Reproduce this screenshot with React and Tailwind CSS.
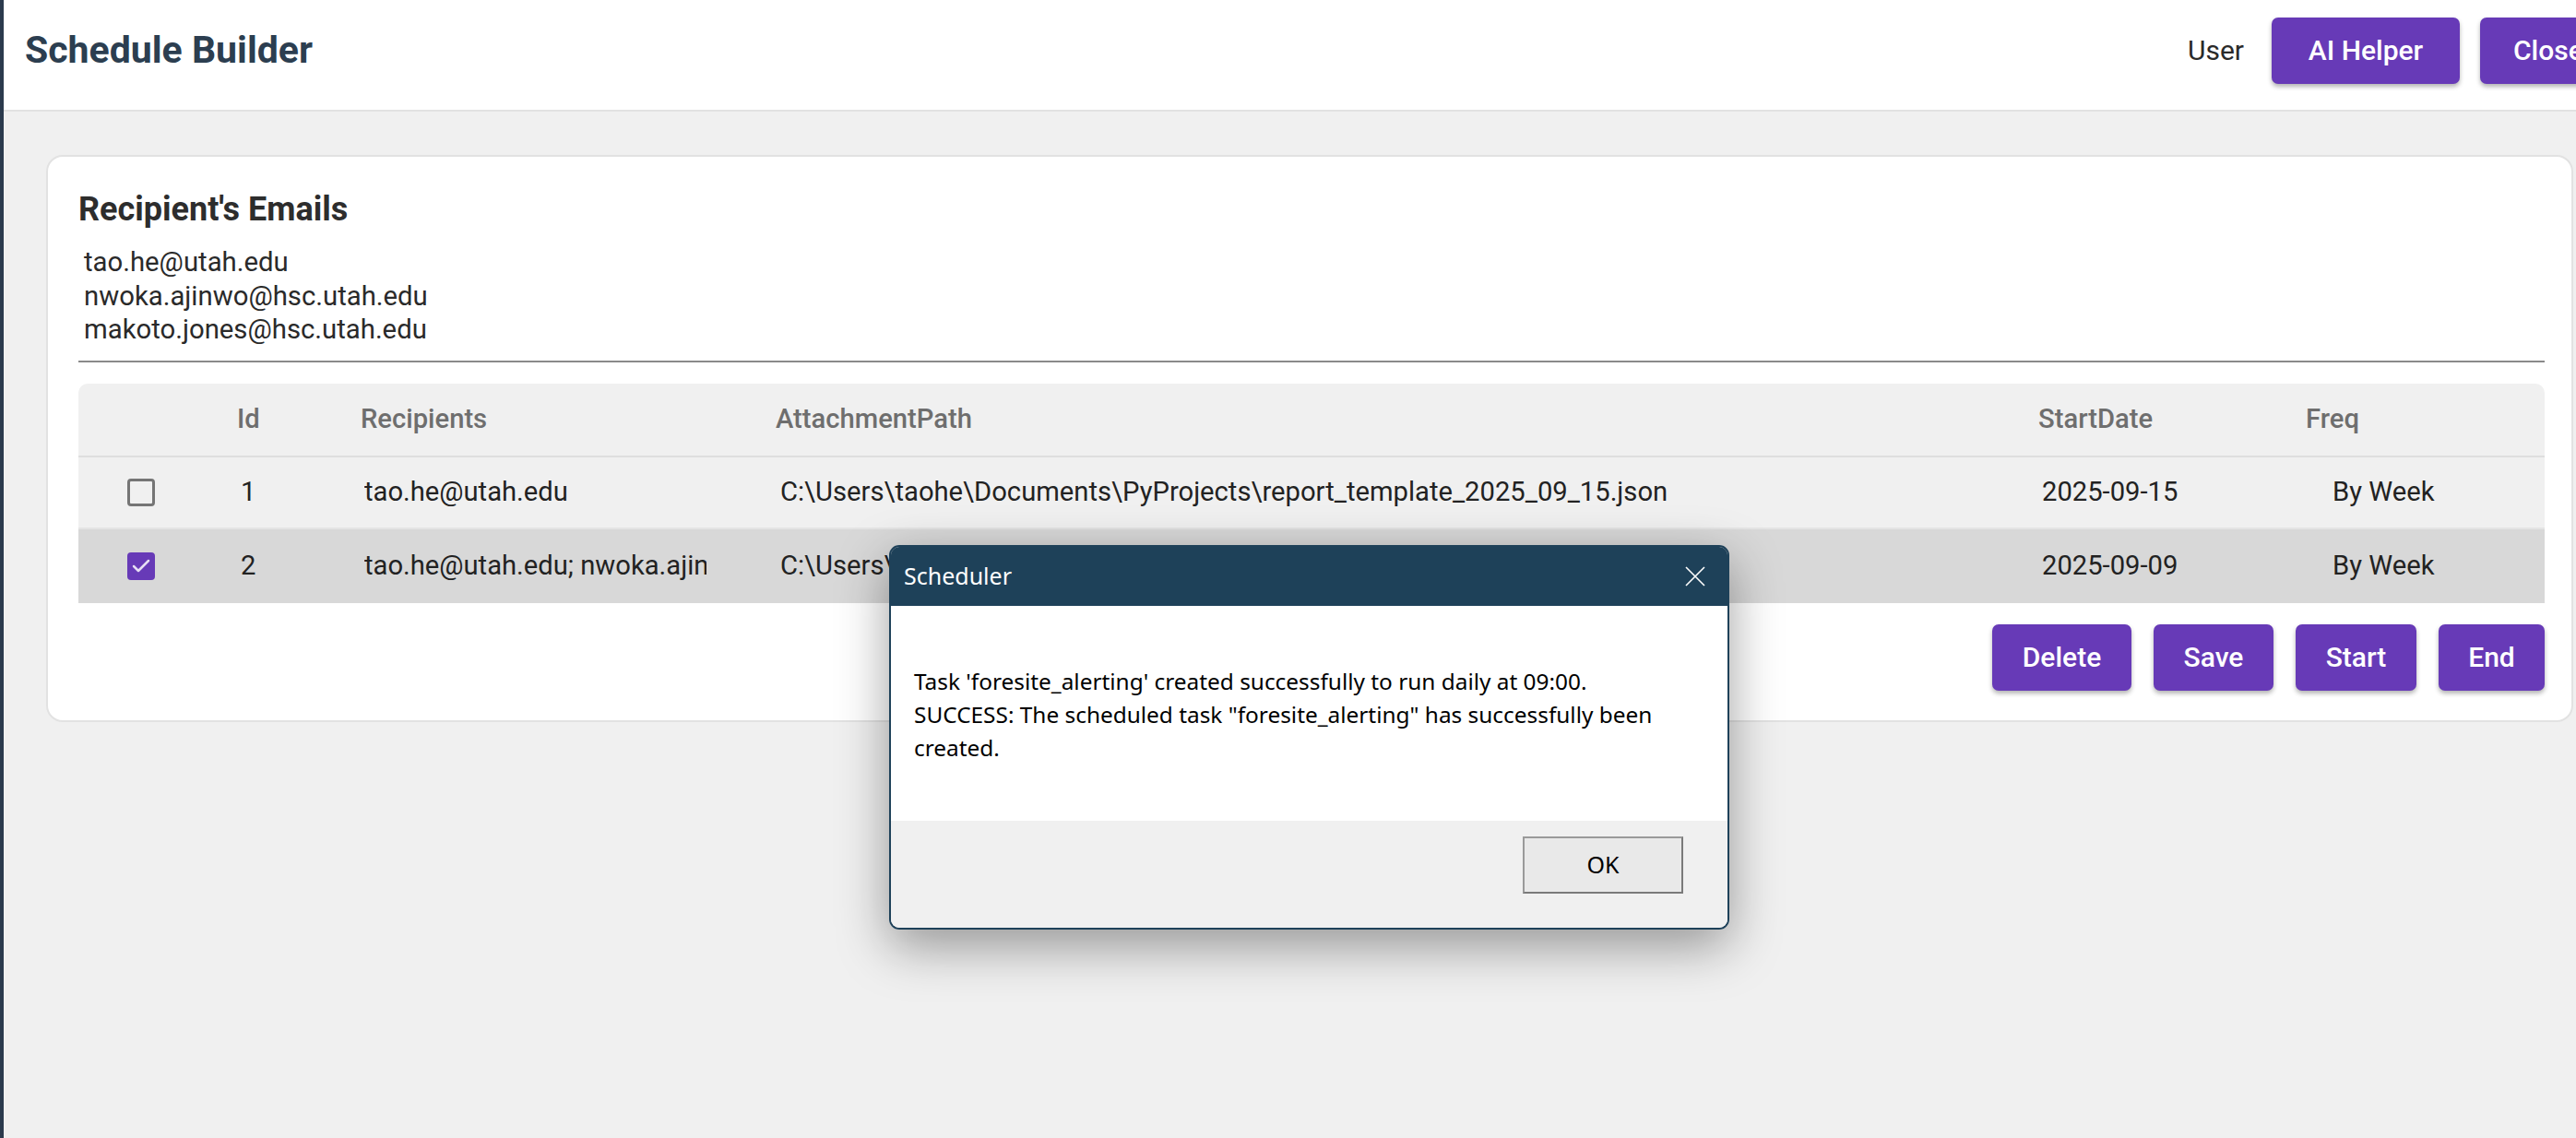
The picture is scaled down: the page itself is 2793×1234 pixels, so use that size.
import { Check } from 'lucide-react'

const rows = [
  {
    id: 1,
    recipients: 'tao.he@utah.edu',
    path: 'C:\\Users\\taohe\\Documents\\PyProjects\\report_template_2025_09_15.json',
    start: '2025-09-15',
    freq: 'By Week',
    checked: false,
  },
  {
    id: 2,
    recipients: 'tao.he@utah.edu; nwoka.ajinwo@hsc.utah.edu; makoto.jones@hsc.utah.edu',
    path: 'C:\\Users\\taohe\\Documents\\PyProjects\\report_template_2025_09_09.json',
    start: '2025-09-09',
    freq: 'By Week',
    checked: true,
  },
]

const emails = ['tao.he@utah.edu', 'nwoka.ajinwo@hsc.utah.edu', 'makoto.jones@hsc.utah.edu']

const cols = 'grid grid-cols-[130px_155px_450px_1370px_290px_1fr]'

function PurpleButton({ children, className = '' }) {
  return (
    <button
      className={`shrink-0 h-[72px] rounded-[7px] bg-[#673ab7] text-white text-[30px] font-medium shadow-[0_3px_5px_rgba(0,0,0,0.3)] ${className}`}
    >
      {children}
    </button>
  )
}

function Checkbox({ checked }) {
  if (checked) {
    return (
      <div className="w-[30px] h-[30px] rounded-[4px] bg-[#673ab7] flex items-center justify-center">
        <Check size={24} strokeWidth={2.5} className="text-[#e6def3]" />
      </div>
    )
  }
  return <div className="w-[30px] h-[30px] rounded-[4px] border-[3px] border-[#757575]" />
}

export default function App() {
  return (
    <div className="relative w-[2793px] h-[1234px] overflow-hidden bg-[#f0f0f0] border-l-4 border-[#2b3a4d] font-['Roboto',sans-serif]">
      {/* Header */}
      <header className="h-[121px] bg-white border-b-2 border-[#e2e2e2] flex items-center pl-[23px] pb-[10px]">
        <h1 className="text-[41px] font-bold text-[#2c3e50]">Schedule Builder</h1>
        <div className="ml-auto mr-[-46px] flex items-center shrink-0">
          <span className="text-[30px] text-[#2a2a2a]">User</span>
          <PurpleButton className="ml-[30px] w-[204px]">AI Helper</PurpleButton>
          <PurpleButton className="ml-[22px] w-[150px] text-left pl-[36px]">Close</PurpleButton>
        </div>
      </header>

      {/* Card */}
      <div className="ml-[46px] mt-[47px] w-[2740px] bg-white border-2 border-[#e2e2e2] rounded-[18px] pl-[33px] pr-[29px] pt-[29px] pb-[32px]">
        <h2 className="text-[36px] leading-[56px] font-bold text-[#2d2d2d]">Recipient&apos;s Emails</h2>
        <div className="mt-[11px] pl-[6px] pb-[15px] border-b-2 border-[#8a8a8a] text-[29.3px] leading-[36.5px] text-[#2a2a2a]">
          {emails.map(e => (
            <div key={e}>{e}</div>
          ))}
        </div>

        {/* Table */}
        <div className="mt-[23px] rounded-t-[10px] overflow-hidden bg-[#f0f0f0]">
          <div className={`${cols} h-[80px] items-center border-b-2 border-[#dedede] text-[29.2px] font-medium text-[#6e6e6e]`}>
            <div />
            <div className="pl-[42px]">Id</div>
            <div className="pl-[21px]">Recipients</div>
            <div className="pl-[21px]">AttachmentPath</div>
            <div className="pl-[20px]">StartDate</div>
            <div className="pl-[20px]">Freq</div>
          </div>
          {rows.map(r => (
            <div
              key={r.id}
              className={`${cols} h-[78px] items-center text-[29.2px] text-[#222] ${r.checked ? 'bg-[#d8d8d8] h-[80px]' : 'border-b-2 border-[#e4e4e4]'}`}
            >
              <div className="pl-[53px]">
                <Checkbox checked={r.checked} />
              </div>
              <div className="pl-[46px]">{r.id}</div>
              <div className="pl-[25px] pr-[54px]">
                <div className="overflow-hidden whitespace-nowrap">{r.recipients}</div>
              </div>
              <div className="pl-[26px] whitespace-nowrap overflow-hidden">{r.path}</div>
              <div className="pl-[24px]">{r.start}</div>
              <div className="pl-[49px]">{r.freq}</div>
            </div>
          ))}
        </div>

        <div className="mt-[23px] flex justify-end gap-[24px]">
          <PurpleButton className="w-[151px]">Delete</PurpleButton>
          <PurpleButton className="w-[130px]">Save</PurpleButton>
          <PurpleButton className="w-[131px]">Start</PurpleButton>
          <PurpleButton className="w-[115px]">End</PurpleButton>
        </div>
      </div>

      {/* Scheduler dialog */}
      <div className="absolute left-[960px] top-[591px] w-[911px] h-[417px] flex flex-col rounded-[11px] border-2 border-[#1e4159] overflow-hidden shadow-[0_18px_55px_rgba(0,0,0,0.38)] font-['Noto_Sans',sans-serif]">
        <div className="h-[64px] shrink-0 bg-[#1e4159] flex items-center pl-[14px] pr-[24px] text-white">
          <span className="text-[25px]">Scheduler</span>
          <svg className="ml-auto" width="22" height="22" viewBox="0 0 22 22">
            <path d="M1 1 L21 21 M21 1 L1 21" stroke="white" strokeWidth="1.6" fill="none" />
          </svg>
        </div>
        <div className="h-[233px] shrink-0 bg-white pl-[25px] pr-[30px] pt-[64px] text-[24.4px] leading-[36px] text-black">
          <div>Task &apos;foresite_alerting&apos; created successfully to run daily at 09:00.</div>
          <div>
            SUCCESS: The scheduled task &quot;foresite_alerting&quot; has successfully been
            <br />
            created.
          </div>
        </div>
        <div className="flex-1 bg-[#f0f0f0] flex justify-end pr-[48px] pt-[17px]">
          <button className="w-[174px] h-[62px] bg-[#e9e9e9] border-2 border-[#7a7a7a] border-t-[#9a9a9a] border-l-[#9a9a9a] text-[25px] text-black">
            OK
          </button>
        </div>
      </div>
    </div>
  )
}
